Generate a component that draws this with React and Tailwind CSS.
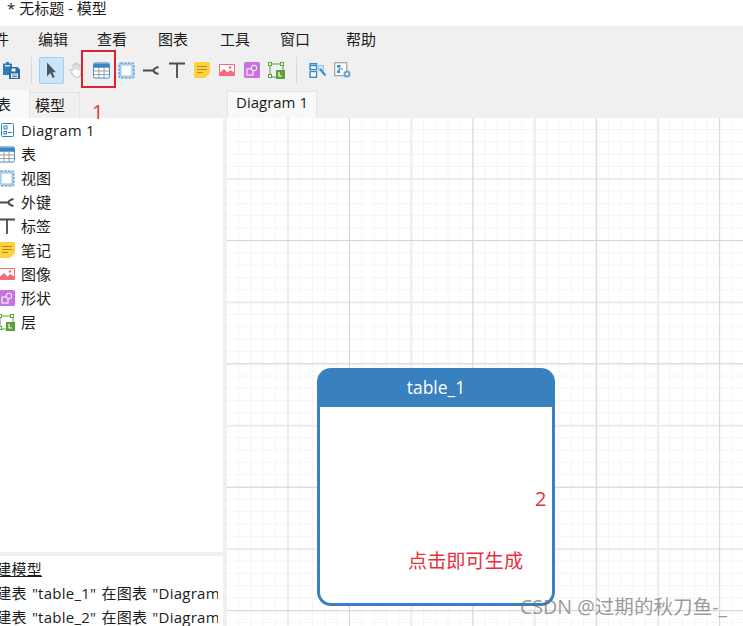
import React from 'react';

const font = { fontFamily: '"Open Sans", "Noto Sans CJK SC", sans-serif' };

const PasteIcon = () => (
  <svg width="18" height="18" viewBox="0 0 18 18">
    <path d="M1 2.500h3V1h3v1.500h3V6H7.500v8H1z" fill="#2f7bbd" />
    <path d="M3 4h5v1.500H3z" fill="#cfe4f5" />
    <path d="M7 6h8.500L18 8.500V18H7z" fill="#2c6aa3" />
    <path d="M9.500 7.500h4v3h-4z" fill="#fff" />
    <path d="M9 12.500h7v4.300H9z" fill="#fff" />
    <path d="M10 14h5M10 15.500h5" stroke="#2c6aa3" strokeWidth="0.800" />
  </svg>
);

const ArrowIcon = () => (
  <svg width="16" height="18" viewBox="0 0 16 18">
    <path d="M3 1.500v14l3.200-3.400 2.600 5 2-1-2.400-4.800h3.600z" fill="#4d5560" />
  </svg>
);

const HandIcon = () => (
  <svg width="18" height="18" viewBox="0 0 18 18" fill="#fafafa" stroke="#c4c4c4" strokeWidth="1.100" strokeLinejoin="round">
    <path d="M5 9V4.200a1 1 0 0 1 2 0V8 3a1 1 0 0 1 2 0v5-4.200a1 1 0 0 1 2 0V9 5.500a1 1 0 0 1 2 0V11c0 3.500-1.800 5.500-4.500 5.500C6.500 16.500 5.500 15 4 12.500L2.500 10c-.7-1.200.8-2 1.600-1z" />
  </svg>
);

const TableIcon = () => (
  <svg width="17" height="17" viewBox="0 0 18 18">
    <rect x="0.500" y="1" width="17" height="16" rx="1.500" fill="#fff" stroke="#3d85c2" />
    <path d="M1 2.500a1 1 0 0 1 1-1h14a1 1 0 0 1 1 1V6H1z" fill="#3d85c2" />
    <path d="M1 9.500h16M1 13.300h16M6.300 6v11M11.700 6v11" stroke="#8f9aa5" strokeWidth="1" />
  </svg>
);

const ViewIcon = () => (
  <svg width="17" height="17" viewBox="0 0 17 17">
    <rect x="1" y="1" width="15" height="15" rx="1.500" fill="#bcdcf5" stroke="#3d85c2" strokeDasharray="2.500 1.200" />
    <rect x="3" y="3" width="11" height="11" fill="#fff" stroke="#8dbde3" />
  </svg>
);

const KeyIcon = () => (
  <svg width="17" height="17" viewBox="0 0 17 17" fill="none" stroke="#4a4a4a" strokeWidth="2">
    <path d="M0 8.500h11" />
    <path d="M15.500 5Q11 6 10.500 8.500 11 11 15.500 12" />
  </svg>
);

const LabelIcon = () => (
  <svg width="16" height="16" viewBox="0 0 16 16" fill="none" stroke="#4a4a4a" strokeWidth="1.800">
    <path d="M0 1.500h16M8 1.500V16" />
  </svg>
);

const NoteIcon = () => (
  <svg width="16" height="16" viewBox="0 0 16 16">
    <path d="M1.500 0h13A1.500 1.500 0 0 1 16 1.500V11l-5 5H1.500A1.500 1.500 0 0 1 0 14.500v-13A1.500 1.500 0 0 1 1.500 0z" fill="#fdd23e" />
    <path d="M3 4.500h10M3 7.500h10M3 10.500h6" stroke="#b58a1d" strokeWidth="1" />
  </svg>
);

const ImageIcon = () => (
  <svg width="16" height="16" viewBox="0 0 16 16">
    <rect x="0" y="2" width="16" height="12" rx="1" fill="#f46a78" />
    <path d="M1 3h14v7.500L11.500 8 8.500 10.500 5 7l-4 3.500z" fill="#fff" />
    <circle cx="11" cy="5.500" r="1.300" fill="#f46a78" />
  </svg>
);

const ShapeIcon = () => (
  <svg width="16" height="16" viewBox="0 0 16 16">
    <rect width="16" height="16" rx="1.500" fill="#c874df" />
    <rect x="3" y="7" width="6" height="6" fill="#c874df" stroke="#fff" />
    <circle cx="10" cy="6" r="2.800" fill="#c874df" stroke="#fff" />
  </svg>
);

const LayerIcon = () => (
  <svg width="17" height="17" viewBox="0 0 17 17">
    <rect x="2" y="2" width="13" height="13" fill="none" stroke="#5e9e3c" />
    <rect x="0.500" y="0.500" width="3" height="3" fill="#fff" stroke="#5e9e3c" />
    <rect x="12.500" y="0.500" width="3" height="3" fill="#fff" stroke="#5e9e3c" />
    <rect x="0.500" y="12.500" width="3" height="3" fill="#fff" stroke="#5e9e3c" />
    <rect x="8" y="8" width="9" height="9" fill="#5e9e3c" />
    <path d="M11 10v4h3" fill="none" stroke="#fff" strokeWidth="1.200" />
  </svg>
);

const FindIcon = () => (
  <svg width="17" height="15" viewBox="0 0 17 15">
    <rect x="1" y="0.700" width="6.500" height="5.800" fill="#fff" stroke="#3d8ad0" strokeWidth="1.400" />
    <path d="M1 2.500h6.500" stroke="#3d8ad0" strokeWidth="1.500" />
    <rect x="1" y="8.500" width="6.500" height="5.800" fill="#fff" stroke="#3d8ad0" strokeWidth="1.400" />
    <rect x="9.500" y="2.500" width="5" height="5" fill="#cfe4f5" stroke="#5aa0d8" strokeDasharray="1 1" />
    <path d="M11 6l5.500 6.500" stroke="#3d8ad0" strokeWidth="2" />
  </svg>
);

const ModelIcon = () => (
  <svg width="17" height="16" viewBox="0 0 17 16">
    <rect x="0.700" y="0.700" width="12" height="13" fill="#fff" stroke="#a6a6a6" strokeWidth="1.300" />
    <path d="M3 3h3.500v2.500H3zM3 8.500h3v2.500H3z" fill="#3d8ad0" />
    <path d="M5 5.500v4M5 7h4" fill="none" stroke="#3d8ad0" />
    <circle cx="13" cy="12" r="3.500" fill="#6ea6d8" />
    <circle cx="13" cy="12" r="1.300" fill="#fff" />
  </svg>
);

const DiagramIcon = () => (
  <svg width="13" height="14" viewBox="0 0 13 14" fill="none" stroke="#2f7fd0">
    <rect x="0.500" y="0.500" width="12" height="13" rx="1" />
    <rect x="3" y="3" width="3" height="3" />
    <rect x="3" y="8.500" width="2.500" height="2.500" />
    <path d="M7 9.500h4" />
  </svg>
);

const toolSlots = [HandIcon, TableIcon, ViewIcon, KeyIcon, LabelIcon, NoteIcon, ImageIcon, ShapeIcon, LayerIcon];

const treeRows = [
  { label: 'Diagram 1', Icon: DiagramIcon, shift: 'ml-px' },
  { label: '表', Icon: TableIcon, shift: '-ml-[2px]' },
  { label: '视图', Icon: ViewIcon, shift: '-ml-[2px]' },
  { label: '外键', Icon: KeyIcon, shift: '-ml-[2px]' },
  { label: '标签', Icon: LabelIcon, shift: '-ml-px' },
  { label: '笔记', Icon: NoteIcon, shift: '-ml-px' },
  { label: '图像', Icon: ImageIcon, shift: '-ml-px' },
  { label: '形状', Icon: ShapeIcon, shift: '-ml-px' },
  { label: '层', Icon: LayerIcon, shift: '-ml-[2px]' },
];

const menus = [
  { label: '编辑', cls: 'ml-[29px]' },
  { label: '查看', cls: 'ml-[29px]' },
  { label: '图表', cls: 'ml-[31px]' },
  { label: '工具', cls: 'ml-[32px]' },
  { label: '窗口', cls: 'ml-[30px]' },
  { label: '帮助', cls: 'ml-[36px]' },
];

export default function App() {
  return (
    <div className="relative w-[743px] h-[626px] overflow-hidden bg-white text-[15px] text-[#1c1c1c] flex flex-col" style={font}>
      <div className="h-[26px] shrink-0 pl-[7px] leading-[16px] whitespace-nowrap">* 无标题 - 模型</div>

      <div className="h-[28px] shrink-0 bg-[#f0f0f0] flex items-center pb-px whitespace-nowrap">
        <span className="-ml-[21px]">文件</span>
        {menus.map((m) => (
          <span key={m.label} className={m.cls}>{m.label}</span>
        ))}
      </div>

      <div className="h-[36px] shrink-0 bg-[#f0f0f0] flex items-center pb-[4px]">
        <div className="w-[22px] flex justify-center"><PasteIcon /></div>
        <div className="ml-[9px] w-px h-[26px] bg-[#d9d9d9]" />
        <div className="ml-[7px] w-[25px] h-[27px] bg-[#cce4f7] border border-[#a6d0f0] rounded-[2px] flex items-center justify-center"><ArrowIcon /></div>
        {toolSlots.map((Icon, i) => (
          <div key={i} className="w-[25px] flex justify-center"><Icon /></div>
        ))}
        <div className="ml-[7px] w-px h-[26px] bg-[#d9d9d9]" />
        <div className="ml-[8px] w-[25px] flex justify-center"><FindIcon /></div>
        <div className="w-[25px] flex justify-center"><ModelIcon /></div>
      </div>

      <div className="flex-1 flex min-h-0">
        <div className="w-[223px] shrink-0 flex flex-col bg-[#f0f0f0]">
          <div className="h-[28px] shrink-0 flex items-end whitespace-nowrap">
            <div className="w-[30px] h-[28px] bg-[#f9f9f9] border-r border-[#e4e4e4] overflow-hidden flex items-center">
              <span className="-ml-[19px]">图表</span>
            </div>
            <div className="w-[50px] h-[26px] border-r border-t border-[#e4e4e4] flex items-center pl-[5px]">模型</div>
          </div>

          <div className="flex-1 bg-white overflow-hidden">
            {treeRows.map(({ label, Icon, shift }) => (
              <div key={label} className="h-[24px] flex items-center whitespace-nowrap">
                <div className="w-[21px] shrink-0 overflow-hidden flex items-center">
                  <div className={shift}><Icon /></div>
                </div>
                <span className={label === 'Diagram 1' ? 'tracking-[0.2px]' : ''}>{label}</span>
              </div>
            ))}
          </div>

          <div className="h-[70px] shrink-0 mt-[4px] bg-white whitespace-nowrap leading-[24px] pt-px tracking-[0.25px] [word-spacing:1px]">
            <div className="w-[218px] overflow-hidden">
              <div className="-ml-[19px] underline">新建模型</div>
              <div className="-ml-[19px]">新建表 "table_1" 在图表 "Diagram 1" 中</div>
              <div className="-ml-[19px]">新建表 "table_2" 在图表 "Diagram 1" 中</div>
            </div>
          </div>
        </div>

        <div className="w-[4px] shrink-0 bg-[#f0f0f0]" />

        <div className="flex-1 flex flex-col min-w-0">
          <div className="h-[28px] shrink-0 bg-[#f0f0f0] flex items-end">
            <div className="w-[90px] h-[27px] pb-[5px] bg-[#f9f9f9] border-x border-t border-[#e4e4e4] flex items-center justify-center whitespace-nowrap">Diagram 1</div>
          </div>

          <div className="relative flex-1 overflow-hidden bg-white bg-[image:linear-gradient(to_right,#d4d4d4_1px,transparent_1px),linear-gradient(to_bottom,#d4d4d4_1px,transparent_1px),linear-gradient(to_right,#ececec_2px,transparent_2px),linear-gradient(to_bottom,#ececec_2px,transparent_2px),linear-gradient(to_right,#f4f4f4_1px,transparent_1px),linear-gradient(to_bottom,#f4f4f4_1px,transparent_1px)] bg-[size:123.4px_123.4px,123.4px_123.4px,123.4px_123.4px,123.4px_123.4px,12.34px_12.34px,12.34px_12.34px] bg-[position:122px_0,0_122px,60px_0,0_60px,11px_0,0_11px]">
            {/* table node */}
            <div className="absolute left-[90px] top-[250px] w-[238px] h-[238px] rounded-[14px] bg-[#3880be] px-[3px] pb-[3px] flex flex-col">
              <div className="h-[39px] shrink-0 pb-[1px] text-white text-[17.5px] flex items-center justify-center">table_1</div>
              <div className="flex-1 bg-white rounded-b-[11px]" />
            </div>
          </div>
        </div>
      </div>

      {/* annotations pasted over the screenshot */}
      <div className="absolute left-[81px] top-[50px] w-[35px] h-[38px] border-2 border-[#e0202c]" />
      <span className="absolute left-[92px] top-[99px] text-[20px] leading-[26px] text-[#e8303c]">1</span>
      <span className="absolute left-[535px] top-[486px] text-[20px] leading-[26px] text-[#e8303c]">2</span>
      <span className="absolute left-[408px] top-[547px] text-[19.2px] leading-[28px] text-[#e8303c] whitespace-nowrap">点击即可生成</span>
      <span className="absolute left-[520px] top-[594px] text-[19.6px] leading-[26px] text-[#6e6e6e]/70 whitespace-nowrap">CSDN @过期的秋刀鱼-_</span>
    </div>
  );
}
